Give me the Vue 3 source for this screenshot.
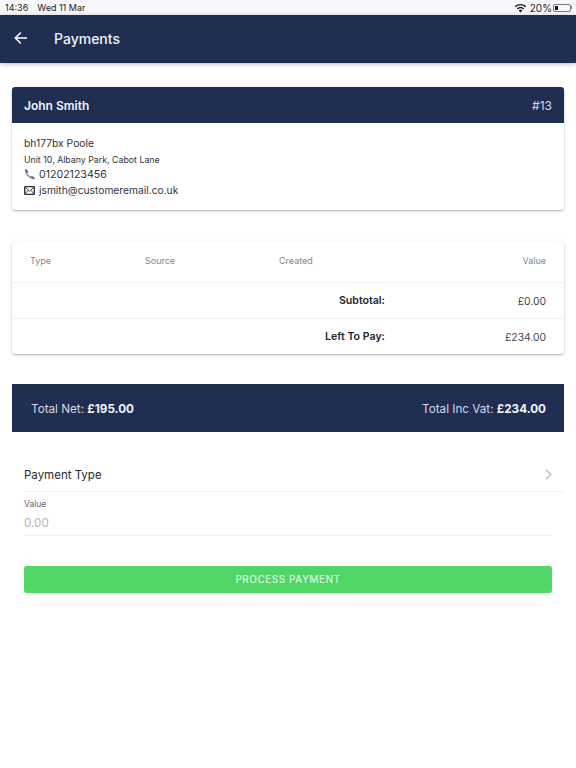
<script setup>
const columns = [
  { label: 'Type', cls: 'col-type' },
  { label: 'Source', cls: 'col-source' },
  { label: 'Created', cls: 'col-created' },
  { label: 'Value', cls: 'col-value' }
]

const totals = [
  { label: 'Subtotal:', value: '£0.00' },
  { label: 'Left To Pay:', value: '£234.00' }
]
</script>

<template>
  <div class="page">
    <div class="status-bar">
      <div class="status-left">
        <span>14:36</span>
        <span>Wed 11 Mar</span>
      </div>
      <div class="status-right">
        <svg class="wifi" width="13" height="10" viewBox="0 0 13 10">
          <path d="M6.5 9.6 4.6 7.4a2.9 2.9 0 0 1 3.8 0Z" fill="#1b1b1f" />
          <path d="M3.3 5.9a5 5 0 0 1 6.4 0" fill="none" stroke="#1b1b1f" stroke-width="1.4" />
          <path d="M1.2 3.6a8.2 8.2 0 0 1 10.6 0" fill="none" stroke="#1b1b1f" stroke-width="1.4" />
        </svg>
        <span>20%</span>
        <div class="battery"><div class="battery-level"></div></div>
        <div class="battery-tip"></div>
      </div>
    </div>

    <header class="app-bar">
      <svg class="back" width="14" height="14" viewBox="0 0 14 14">
        <path d="M13 7H1.5M6.8 1.5 1.3 7l5.5 5.5" fill="none" stroke="#fff" stroke-width="1.5" />
      </svg>
      <span class="app-title">Payments</span>
    </header>

    <main class="content">
      <section class="card customer">
        <div class="customer-head">
          <span class="customer-name">John Smith</span>
          <span class="customer-id">#13</span>
        </div>
        <div class="customer-body">
          <div class="line-main">bh177bx Poole</div>
          <div class="line-small">Unit 10, Albany Park, Cabot Lane</div>
          <div class="line-icon">
            <svg class="icon" width="11" height="11" viewBox="0 0 11 11">
              <path d="M1.6 1.2C2.2 4 3 5.4 4.4 6.8 6 8.300 7.600 9.200 10 9.700" fill="none" stroke="#9a9aa0" stroke-width="1.700" stroke-linecap="round" />
              <path d="M1 1.300 2.700.7 3.900 3.200 2.800 4M6.900 8.200l1-1 2.300 1.500-.6 1.400" fill="#66666c" stroke="#66666c" stroke-width=".7" />
            </svg>
            <span class="phone">01202123456</span>
          </div>
          <div class="line-icon">
            <svg class="icon mail" width="11" height="9" viewBox="0 0 11 9">
              <rect x=".7" y=".7" width="9.6" height="7.6" rx=".6" fill="none" stroke="#2c2c31" stroke-width="1.300" />
              <path d="M1 1.300 5.500 5 10 1.300M1.200 7.800l2.800-3.400M9.800 7.800 7 4.400" fill="none" stroke="#2c2c31" stroke-width=".9" />
            </svg>
            <span class="email">jsmith@customeremail.co.uk</span>
          </div>
        </div>
      </section>

      <section class="card payments">
        <div class="table-head">
          <span v-for="col in columns" :key="col.label" :class="col.cls">{{ col.label }}</span>
        </div>
        <div v-for="row in totals" :key="row.label" class="total-row">
          <span class="total-label">{{ row.label }}</span>
          <span class="total-value">{{ row.value }}</span>
        </div>
      </section>

      <section class="banner">
        <span>Total Net: <b>£195.00</b></span>
        <span>Total Inc Vat: <b>£234.00</b></span>
      </section>

      <section class="form">
        <div class="type-row">
          <span>Payment Type</span>
          <svg width="7" height="11" viewBox="0 0 7 11">
            <path d="M1 .8 5.8 5.500 1 10.200" fill="none" stroke="#b9b9bd" stroke-width="1.200" />
          </svg>
        </div>
        <div class="value-field">
          <div class="value-label">Value</div>
          <div class="value-input">0.00</div>
        </div>
        <button class="pay-btn">PROCESS PAYMENT</button>
      </section>
    </main>
  </div>
</template>

<style scoped>
.page {
  width: 576px;
  height: 768px;
  overflow: hidden;
  background: #fff;
  font-family: Inter, "Liberation Sans", sans-serif;
  color: #2b2b30;
}

.status-bar {
  height: 15px;
  background: #f7f7fa;
  display: flex;
  justify-content: space-between;
  align-items: center;
  padding: 0 4px 0 5px;
  font-size: 9px;
  color: #1b1b1f;
}

.status-left {
  display: flex;
  gap: 9px;
}

.status-right {
  display: flex;
  align-items: center;
  font-size: 10px;
}

.wifi {
  margin-right: 3px;
}

.battery {
  width: 18px;
  height: 8px;
  margin-left: 1px;
  padding: 1px;
  box-sizing: border-box;
  border: 1px solid #77777c;
  border-radius: 2px;
}

.battery-level {
  width: 3px;
  height: 100%;
  background: #111;
}

.battery-tip {
  width: 1px;
  height: 3px;
  background: #8a8a8f;
}

.app-bar {
  height: 48px;
  box-sizing: border-box;
  background: #1f2e51;
  display: flex;
  align-items: center;
  padding: 0 0 2px 14px;
  box-shadow: 0 1px 4px rgba(31, 46, 82, 0.35);
  position: relative;
}

.back {
  margin-right: 26px;
}

.app-title {
  color: #f2f4f8;
  font-size: 14px;
  font-weight: 500;
}

.content {
  padding: 24px 12px 0;
}

.card {
  background: #fff;
  border-radius: 3px;
  box-shadow: 0 1px 2px rgba(0, 0, 0, 0.3), 0 0 4px rgba(0, 0, 0, 0.04);
}

.customer {
  height: 123px;
  overflow: hidden;
}

.customer-head {
  height: 36px;
  background: #1f2e51;
  color: #f2f4f8;
  display: flex;
  justify-content: space-between;
  align-items: center;
  padding: 0 12px;
}

.customer-name {
  font-size: 12px;
  font-weight: 600;
}

.customer-id {
  font-size: 12px;
  color: #d5dae6;
}

.customer-body {
  padding: 12px 12px 0;
  font-size: 10.3px;
  color: #33333a;
}

.line-main {
  line-height: 16px;
}

.line-small {
  font-size: 8.8px;
  line-height: 15px;
  margin-top: 1px;
}

.line-icon {
  display: flex;
  align-items: center;
  height: 15.5px;
  line-height: 15px;
}

.icon {
  margin-right: 4px;
}

.phone {
  font-size: 10.6px;
}

.email {
  font-size: 10.25px;
}

.payments {
  margin-top: 32px;
  height: 112px;
}

.table-head {
  position: relative;
  height: 41px;
  border-bottom: 1px solid #f1f1f3;
  box-sizing: border-box;
  display: flex;
  align-items: center;
  padding: 0 18px 3px;
  font-size: 9px;
  color: #85858b;
}

.col-type {
  width: 115px;
}

.col-source {
  width: 134px;
}

.col-created {
  flex: 1;
}

.total-row {
  height: 35px;
  box-sizing: border-box;
  display: flex;
  align-items: center;
  padding-right: 18px;
  font-size: 10.3px;
}

.total-row + .total-row {
  height: 36px;
  border-top: 1px solid #f1f1f3;
}

.total-label {
  width: 373px;
  text-align: right;
  font-size: 10.6px;
  font-weight: 600;
  color: #26262b;
}

.total-value {
  flex: 1;
  text-align: right;
  color: #45454b;
}

.banner {
  margin-top: 30px;
  height: 48px;
  box-sizing: border-box;
  background: #1f2e51;
  color: #d5dae6;
  display: flex;
  justify-content: space-between;
  align-items: center;
  padding: 1px 18px 0 19px;
  font-size: 11.7px;
}

.banner b {
  color: #f4f5f8;
  font-weight: 700;
}

.form {
  padding-left: 12px;
}

.type-row {
  height: 60px;
  box-sizing: border-box;
  padding: 26px 12px 0 0;
  border-bottom: 1px solid #f1f1f3;
  display: flex;
  justify-content: space-between;
  align-items: center;
  font-size: 11.5px;
  color: #2b2b30;
}

.value-field {
  margin-right: 12px;
  height: 44px;
  box-sizing: border-box;
  border-bottom: 1px solid #f1f1f3;
  padding-top: 7px;
}

.value-label {
  font-size: 8.5px;
  line-height: 10px;
  color: #66666c;
}

.value-input {
  margin-top: 7px;
  font-size: 11.6px;
  line-height: 15px;
  color: #b4b4b9;
}

.pay-btn {
  display: block;
  width: 528px;
  height: 27px;
  margin-top: 30px;
  padding: 0 0 2px;
  border: none;
  border-radius: 3px;
  background: #4fd765;
  color: #d9f7de;
  font-family: inherit;
  font-size: 10px;
  font-weight: 500;
  letter-spacing: 0.5px;
}
</style>
